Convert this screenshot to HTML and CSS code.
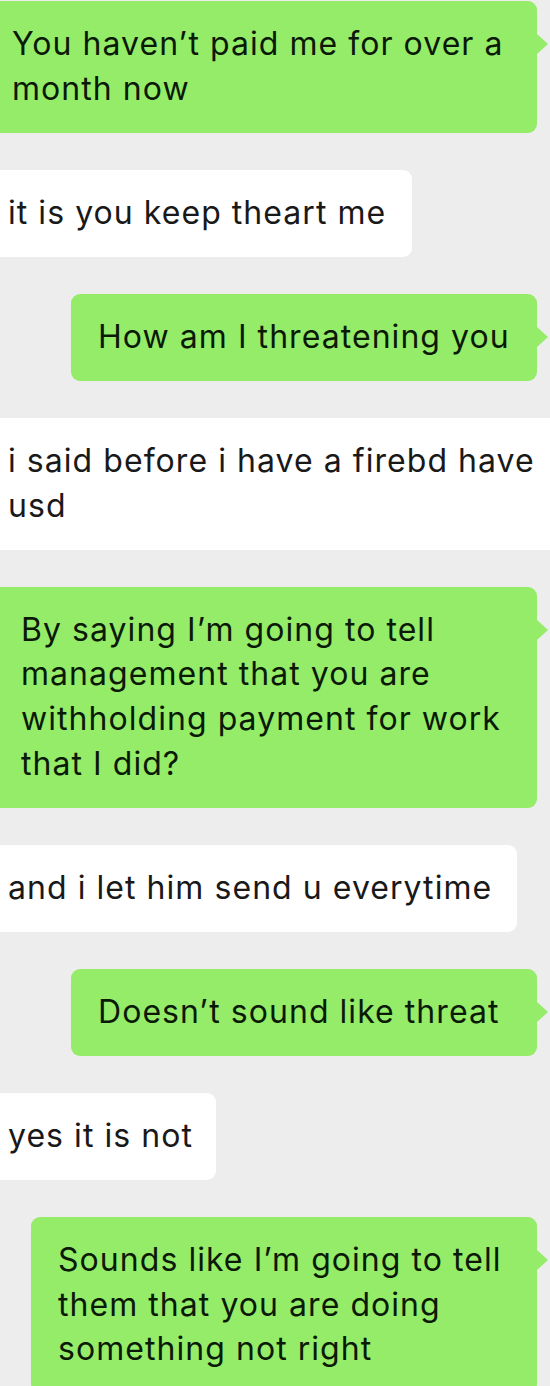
FILE: index.html
```html
<!DOCTYPE html>
<html lang="en">
<head>
<meta charset="utf-8">
<title>Chat</title>
<link rel="stylesheet" href="styles.css">
</head>
<body>
<div class="chat">
  <div class="row out"><div class="bubble green cut-left w-537 pl-12">You haven’t paid me for over a<br>month now</div></div>
  <div class="row in"><div class="bubble white w-412">it is you keep theart me</div></div>
  <div class="row out"><div class="bubble green w-466">How am I threatening you</div></div>
  <div class="row in"><div class="bubble white cut-right w-550">i said before i have a firebd have<br>usd</div></div>
  <div class="row out"><div class="bubble green cut-left w-537 pl-21">By saying I’m going to tell<br>management that you are<br>withholding payment for work<br>that I did?</div></div>
  <div class="row in"><div class="bubble white w-517">and i let him send u everytime</div></div>
  <div class="row out"><div class="bubble green w-466">Doesn’t sound like threat</div></div>
  <div class="row in"><div class="bubble white w-216">yes it is not</div></div>
  <div class="row out"><div class="bubble green w-506">Sounds like I’m going to tell<br>them that you are doing<br>something not right</div></div>
</div>
</body>
</html>
```

FILE: styles.css
```css
html, body {
  margin: 0;
  padding: 0;
  background: #ededed;
}
body {
  width: 550px;
  height: 1386px;
  overflow: hidden;
  font-family: "Inter", "Liberation Sans", sans-serif;
}
.chat {
  display: flex;
  flex-direction: column;
  gap: 37px;
  padding-top: 1px;
}
.row {
  display: flex;
}
.row.out {
  justify-content: flex-end;
  padding-right: 13px;
}
.row.in {
  justify-content: flex-start;
}
.bubble {
  position: relative;
  box-sizing: border-box;
  white-space: nowrap;
  overflow: visible;
  font-size: 32px;
  letter-spacing: 1.05px;
  line-height: 44.75px;
  padding: 21.125px 0 21.125px 27px;
  border-radius: 9px;
  color: #191919;
}
.bubble.green {
  background: #95ec69;
  color: #0b1a06;
}
.bubble.white {
  background: #ffffff;
  padding-left: 8px;
  border-top-left-radius: 0;
  border-bottom-left-radius: 0;
}
.bubble.green::after {
  content: "";
  position: absolute;
  right: -11px;
  top: 33px;
  width: 0;
  height: 0;
  border-top: 10px solid transparent;
  border-bottom: 10px solid transparent;
  border-left: 11px solid #95ec69;
}
.cut-left {
  border-top-left-radius: 0;
  border-bottom-left-radius: 0;
}
.cut-right {
  border-top-right-radius: 0;
  border-bottom-right-radius: 0;
}
.pl-12 { padding-left: 12px; }
.pl-21 { padding-left: 21px; }
.w-216 { width: 216px; }
.w-412 { width: 412px; }
.w-466 { width: 466px; }
.w-506 { width: 506px; }
.w-517 { width: 517px; }
.w-537 { width: 537px; }
.w-550 { width: 550px; }
```
